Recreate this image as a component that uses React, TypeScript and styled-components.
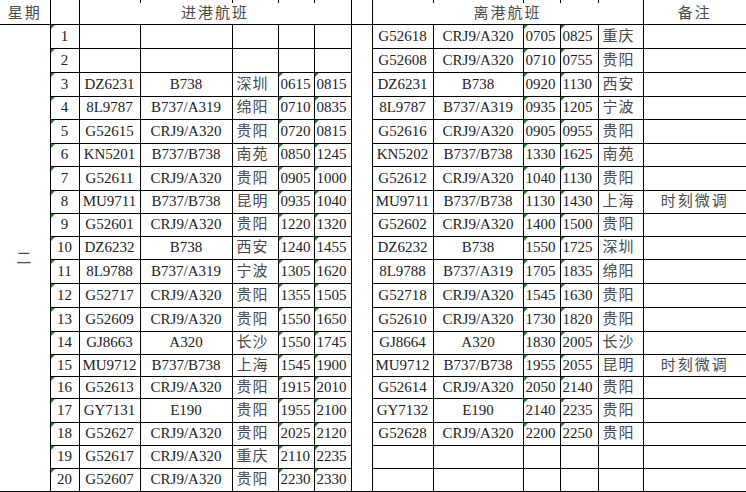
import styled, { createGlobalStyle } from "styled-components";

const GlobalStyle = createGlobalStyle`
  html, body {
    margin: 0;
    padding: 0;
    background: #fff;
  }
`;

const COLS = [50, 29, 61, 92, 46, 36, 37, 21, 61, 90, 37, 38, 45, 103];

// arrivals: flight, type, city, in, out
const ARRIVALS: string[][] = [
  [],
  [],
  ["DZ6231", "B738", "深圳", "0615", "0815"],
  ["8L9787", "B737/A319", "绵阳", "0710", "0835"],
  ["G52615", "CRJ9/A320", "贵阳", "0720", "0815"],
  ["KN5201", "B737/B738", "南苑", "0850", "1245"],
  ["G52611", "CRJ9/A320", "贵阳", "0905", "1000"],
  ["MU9711", "B737/B738", "昆明", "0935", "1040"],
  ["G52601", "CRJ9/A320", "贵阳", "1220", "1320"],
  ["DZ6232", "B738", "西安", "1240", "1455"],
  ["8L9788", "B737/A319", "宁波", "1305", "1620"],
  ["G52717", "CRJ9/A320", "贵阳", "1355", "1505"],
  ["G52609", "CRJ9/A320", "贵阳", "1550", "1650"],
  ["GJ8663", "A320", "长沙", "1550", "1745"],
  ["MU9712", "B737/B738", "上海", "1545", "1900"],
  ["G52613", "CRJ9/A320", "贵阳", "1915", "2010"],
  ["GY7131", "E190", "贵阳", "1955", "2100"],
  ["G52627", "CRJ9/A320", "贵阳", "2025", "2120"],
  ["G52617", "CRJ9/A320", "重庆", "2110", "2235"],
  ["G52607", "CRJ9/A320", "贵阳", "2230", "2330"],
];

// departures: flight, type, out, in, city, note
const DEPARTURES: string[][] = [
  ["G52618", "CRJ9/A320", "0705", "0825", "重庆"],
  ["G52608", "CRJ9/A320", "0710", "0755", "贵阳"],
  ["DZ6231", "B738", "0920", "1130", "西安"],
  ["8L9787", "B737/A319", "0935", "1205", "宁波"],
  ["G52616", "CRJ9/A320", "0905", "0955", "贵阳"],
  ["KN5202", "B737/B738", "1330", "1625", "南苑"],
  ["G52612", "CRJ9/A320", "1040", "1130", "贵阳"],
  ["MU9711", "B737/B738", "1130", "1430", "上海", "时刻微调"],
  ["G52602", "CRJ9/A320", "1400", "1500", "贵阳"],
  ["DZ6232", "B738", "1550", "1725", "深圳"],
  ["8L9788", "B737/A319", "1705", "1835", "绵阳"],
  ["G52718", "CRJ9/A320", "1545", "1630", "贵阳"],
  ["G52610", "CRJ9/A320", "1730", "1820", "贵阳"],
  ["GJ8664", "A320", "1830", "2005", "长沙"],
  ["MU9712", "B737/B738", "1955", "2055", "昆明", "时刻微调"],
  ["G52614", "CRJ9/A320", "2050", "2140", "贵阳"],
  ["GY7132", "E190", "2140", "2235", "贵阳"],
  ["G52628", "CRJ9/A320", "2200", "2250", "贵阳"],
  [],
  [],
];

const ROW_HEIGHTS = [24, 24, 24, 23, 24, 23, 24, 23, 23, 23, 24, 24, 24, 23, 22, 22, 24, 23, 23, 23];

const Sheet = styled.table`
  border-collapse: collapse;
  table-layout: fixed;
  width: 746px;
  font-family: "Liberation Serif", "Noto Sans CJK SC", serif;
  font-size: 15px;
  color: #222;
`;

const Strip = styled.tr`
  height: 3px;

  td {
    padding: 0;
    font-size: 0;
    line-height: 0;
    border-right: 1px solid #000;
  }
`;

const Row = styled.tr<{ $h: number }>`
  height: ${(p) => p.$h}px;
`;

const Cell = styled.td<{ $mark?: boolean; $open?: boolean }>`
  position: relative;
  padding: 0;
  text-align: center;
  white-space: nowrap;
  overflow: hidden;
  line-height: 1;
  border-bottom: 1px solid #000;
  border-right: ${(p) => (p.$open ? "none" : "1px solid #000")};

  &::before {
    content: "";
    display: ${(p) => (p.$mark ? "block" : "none")};
    position: absolute;
    top: 0;
    left: 0;
    border-top: 4px solid #1f8a2a;
    border-right: 4px solid transparent;
  }
`;

const Time = styled(Cell)`
  text-align: left;
  padding-left: 2px;
`;

const HeadCell = styled(Cell)`
  color: #4a4a4a;
  letter-spacing: 2px;
  padding-top: 1px;
`;

const City = styled(Cell)`
  text-align: left;
  color: #4a4a4a;
  letter-spacing: 1px;
  padding-left: 4px;
`;

const Note = styled(Cell)`
  color: #4a4a4a;
  letter-spacing: 2px;
`;

const App = () => (
  <>
    <GlobalStyle />
    <Sheet>
      <colgroup>
        {COLS.map((w, i) => (
          <col key={i} style={{ width: w }} />
        ))}
      </colgroup>
      <tbody>
        <Strip>
          {COLS.map((_, i) => (
            <td key={i} />
          ))}
        </Strip>
        <Row $h={21}>
          <HeadCell>星期</HeadCell>
          <HeadCell />
          <HeadCell colSpan={5}>进港航班</HeadCell>
          <HeadCell />
          <HeadCell colSpan={5}>离港航班</HeadCell>
          <HeadCell $open>备注</HeadCell>
        </Row>
        {ROW_HEIGHTS.map((h, i) => {
          const a = ARRIVALS[i];
          const d = DEPARTURES[i];
          return (
            <Row key={i} $h={h}>
              {i === 0 && <HeadCell rowSpan={20}>二</HeadCell>}
              <Cell $mark>{i + 1}</Cell>
              <Cell>{a[0]}</Cell>
              <Cell>{a[1]}</Cell>
              <City>{a[2]}</City>
              <Time $mark={!!a[3]}>{a[3]}</Time>
              <Time $mark={!!a[4]}>{a[4]}</Time>
              {i === 0 && <Cell rowSpan={20} />}
              <Cell>{d[0]}</Cell>
              <Cell>{d[1]}</Cell>
              <Time $mark={!!d[2]}>{d[2]}</Time>
              <Time $mark={!!d[3]}>{d[3]}</Time>
              <City>{d[4]}</City>
              <Note $open>{d[5]}</Note>
            </Row>
          );
        })}
      </tbody>
    </Sheet>
  </>
);

export default App;
